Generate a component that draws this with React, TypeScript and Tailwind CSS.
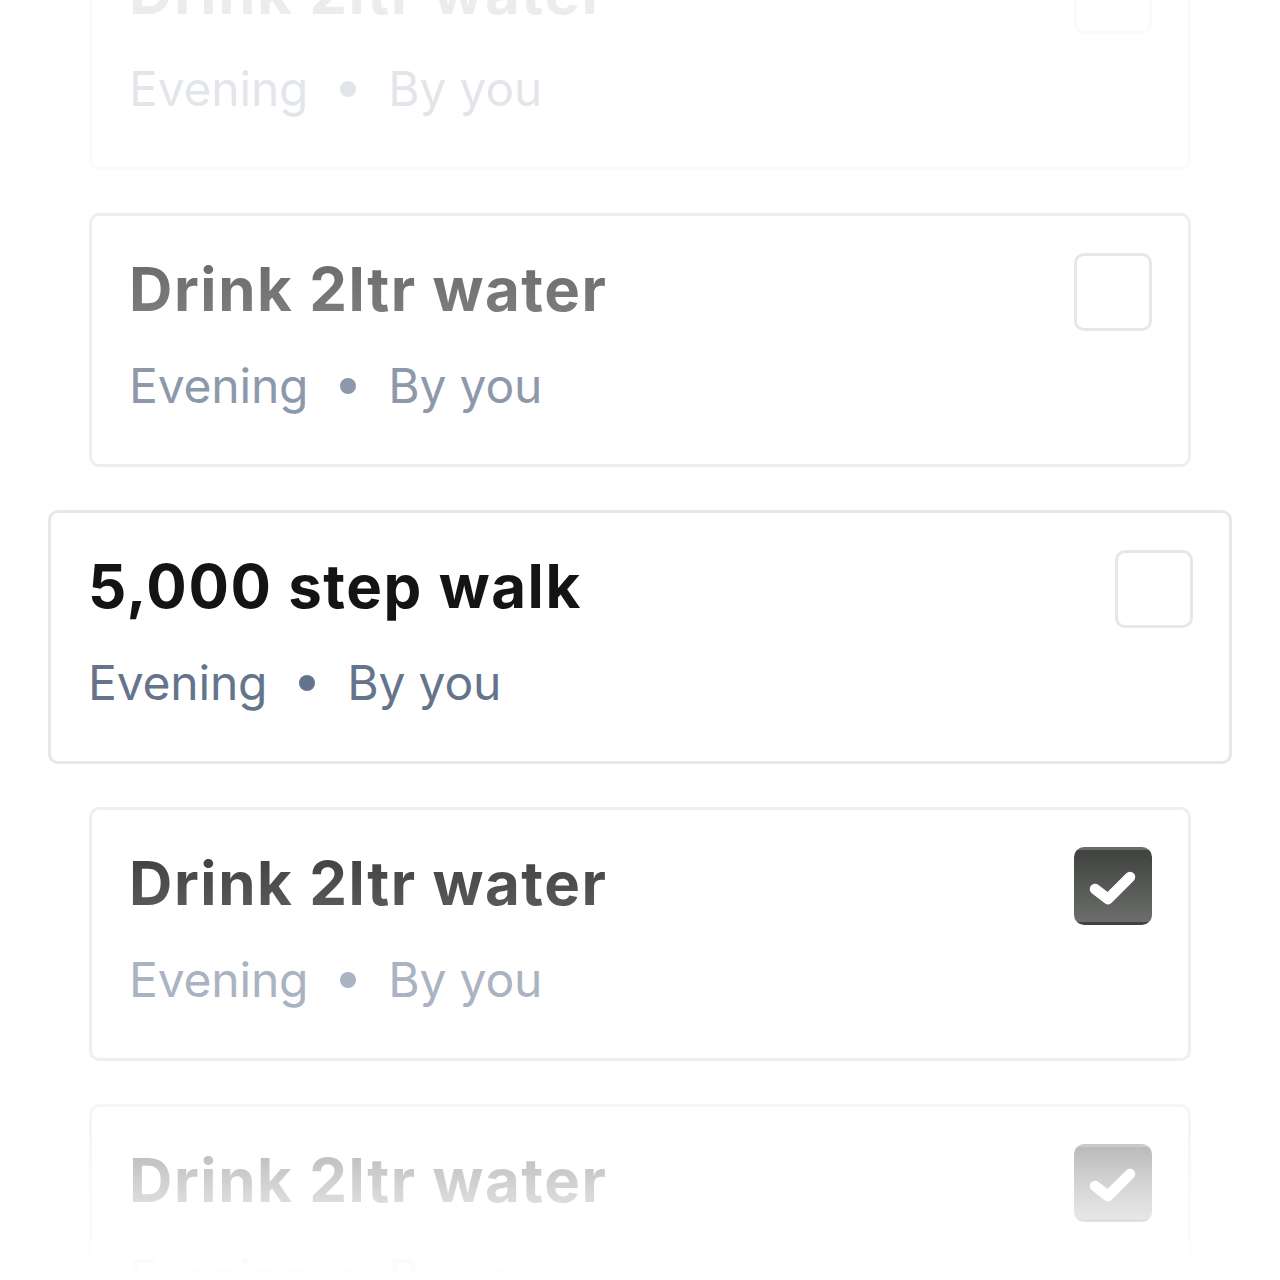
type Tone = "faint" | "soft" | "focus" | "done" | "fade";

const tones: Record<
  Tone,
  { wrap: string; card: string; title: string; sub: string; dot: string; box: string }
> = {
  faint: {
    wrap: "px-[89px] opacity-[0.18]",
    card: "border-[#e5e7eb]",
    title: "text-[#9a9c9a]",
    sub: "text-[#64748b]",
    dot: "bg-[#64748b]",
    box: "border-[#e5e7eb]",
  },
  soft: {
    wrap: "px-[89px]",
    card: "border-[#eeeeef]",
    title: "bg-gradient-to-b from-[#686a68] to-[#7f817f] bg-clip-text text-transparent",
    sub: "text-[#8d99ab]",
    dot: "bg-[#8d99ab]",
    box: "border-[#e6e7ea]",
  },
  focus: {
    wrap: "px-[48px]",
    card: "border-[#e6e7e9]",
    title: "text-[#121512]",
    sub: "text-[#64748b]",
    dot: "bg-[#64748b]",
    box: "border-[#e5e7eb]",
  },
  done: {
    wrap: "px-[89px]",
    card: "border-[#efeff0]",
    title: "bg-gradient-to-b from-[#3b3e3b] to-[#5d605d] bg-clip-text text-transparent",
    sub: "text-[#aab3c1]",
    dot: "bg-[#aab3c1]",
    box: "border-transparent bg-gradient-to-b from-[#3f423f] to-[#6b6e6b]",
  },
  fade: {
    wrap: "px-[89px] opacity-[0.4]",
    card: "border-[#e5e7eb]",
    title: "bg-gradient-to-b from-[#3b3e3b] to-[#5d605d] bg-clip-text text-transparent",
    sub: "text-[#aab3c1]",
    dot: "bg-[#aab3c1]",
    box: "border-transparent bg-gradient-to-b from-[#3f423f] to-[#6b6e6b]",
  },
};

function Check() {
  return (
    <svg viewBox="0 0 72 72" className="h-full w-full">
      <path
        d="M18 39 L31 49 L53 27"
        fill="none"
        stroke="white"
        strokeWidth="10.5"
        strokeLinecap="round"
        strokeLinejoin="round"
      />
    </svg>
  );
}

function TaskCard({ title, tone, checked }: { title: string; tone: Tone; checked?: boolean }) {
  const t = tones[tone];
  return (
    <div className={t.wrap}>
      <div
        className={`flex h-[254px] items-start justify-between rounded-[10px] border-[3px] bg-white py-[37px] pl-[37px] pr-[36px] ${t.card}`}
      >
        <div className="flex flex-col">
          <p className={`text-[60px] font-bold leading-[72px] tracking-[0.026em] ${t.title}`}>
            {title}
          </p>
          <div className={`mt-[32px] flex items-center gap-[32px] text-[48px] leading-[58px] tracking-[-0.004em] ${t.sub}`}>
            <span>Evening</span>
            <span className={`h-[16px] w-[16px] rounded-full ${t.dot}`} />
            <span>By you</span>
          </div>
        </div>
        <div className={`h-[78px] w-[78px] shrink-0 rounded-[10px] border-[3px] ${t.box}`}>
          {checked && <Check />}
        </div>
      </div>
    </div>
  );
}

export default function App() {
  return (
    <div className="relative h-[1280px] w-[1280px] overflow-hidden bg-white font-['Inter',sans-serif]">
      <div className="mt-[-84px] flex flex-col gap-[43px]">
        <TaskCard title="Drink 2ltr water" tone="faint" />
        <TaskCard title="Drink 2ltr water" tone="soft" />
        <TaskCard title="5,000 step walk" tone="focus" />
        <TaskCard title="Drink 2ltr water" tone="done" checked />
        <TaskCard title="Drink 2ltr water" tone="fade" checked />
      </div>
      <div className="pointer-events-none absolute inset-x-0 bottom-0 h-[150px] bg-gradient-to-b from-white/0 to-white" />
    </div>
  );
}
